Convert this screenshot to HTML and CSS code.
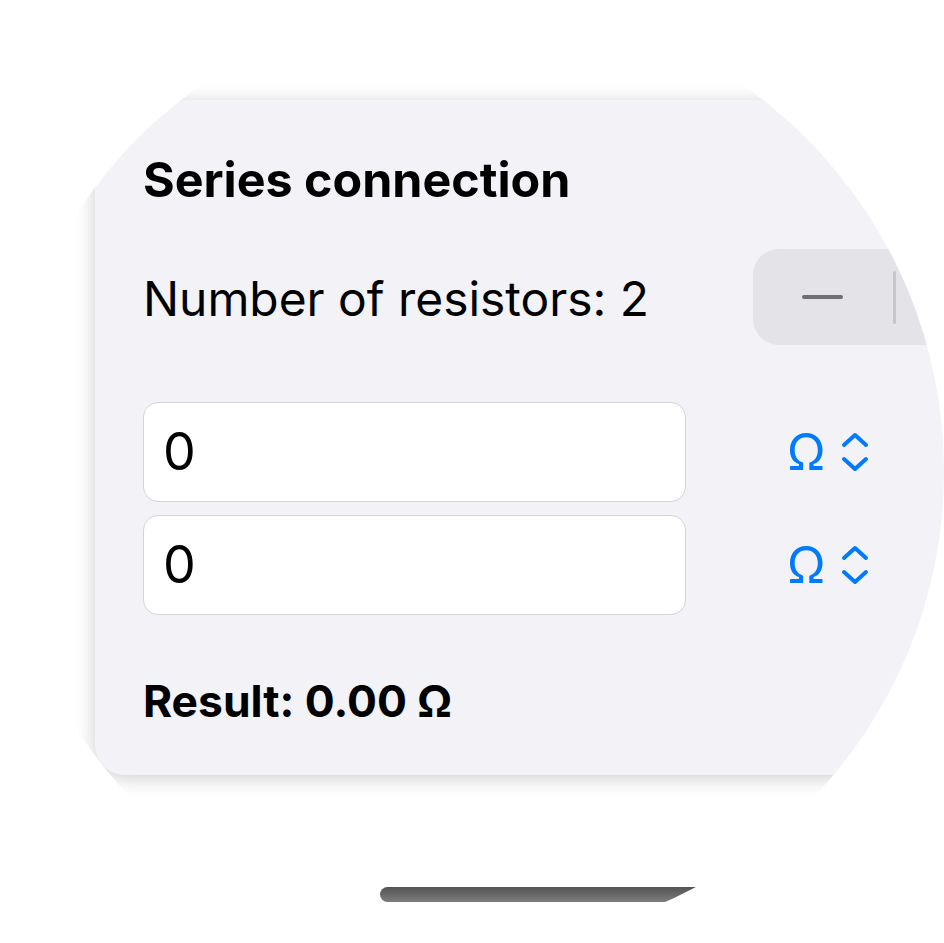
FILE: index.html
```html
<!DOCTYPE html>
<html lang="en">
<head>
<meta charset="utf-8">
<title>Series connection</title>
<link rel="stylesheet" href="styles.css">
</head>
<body>
<div class="lens">
  <div class="screen">
    <section class="card">
      <h1 class="title">Series connection</h1>
      <div class="count-row">
        <span class="count-label">Number of resistors: 2</span>
        <div class="stepper">
          <span class="step"><span class="minus-bar"></span></span>
          <span class="step-divider"></span>
          <span class="step"><span class="plus-bar"></span><span class="plus-bar vertical"></span></span>
        </div>
      </div>
      <div class="fields">
        <div class="field-row">
          <div class="field">0</div>
          <div class="unit">
            <span class="unit-symbol">Ω</span>
            <svg class="chevrons" viewBox="0 0 30 42" width="30" height="42" aria-hidden="true">
              <polyline points="4,14 15,4 26,14"/>
              <polyline points="4,28 15,38 26,28"/>
            </svg>
          </div>
        </div>
        <div class="field-row">
          <div class="field">0</div>
          <div class="unit">
            <span class="unit-symbol">Ω</span>
            <svg class="chevrons" viewBox="0 0 30 42" width="30" height="42" aria-hidden="true">
              <polyline points="4,14 15,4 26,14"/>
              <polyline points="4,28 15,38 26,28"/>
            </svg>
          </div>
        </div>
      </div>
      <p class="result">Result: 0.00 Ω</p>
    </section>
    <div class="home-indicator"></div>
  </div>
</div>
</body>
</html>
```
FILE: styles.css
```css
* { box-sizing: border-box; }

html, body {
  margin: 0;
  padding: 0;
  background: #ffffff;
}

body {
  font-family: Inter, "Liberation Sans", sans-serif;
  color: #000;
}

.lens {
  width: 944px;
  height: 943px;
  overflow: hidden;
  background: #ffffff;
  clip-path: circle(472px at 472px 471.5px);
}

.screen {
  padding-top: 100px;
  padding-left: 95px;
  width: 1200px;
}

.card {
  width: 990px;
  background: #f2f2f7;
  border-radius: 30px;
  padding: 50px 50px 44px 48px;
  box-shadow: 0 3px 20px rgba(0, 0, 0, 0.2);
}

.title {
  margin: 0;
  font-size: 48.4px;
  line-height: 60px;
  font-weight: 700;
  letter-spacing: 0;
}

.count-row {
  margin-top: 39px;
  height: 96px;
  display: flex;
  align-items: center;
  justify-content: space-between;
}

.count-label {
  font-size: 47.9px;
  line-height: 60px;
  margin-top: 4px;
}

.stepper {
  width: 282px;
  height: 96px;
  border-radius: 26px;
  background: #e3e3e8;
  display: flex;
  align-items: center;
}

.step {
  flex: 1;
  height: 100%;
  display: flex;
  align-items: center;
  justify-content: center;
  position: relative;
}

.minus-bar,
.plus-bar {
  width: 41px;
  height: 4px;
  border-radius: 2px;
  background: #6f6f73;
}

.plus-bar.vertical {
  position: absolute;
  transform: rotate(90deg);
}

.step-divider {
  width: 3px;
  height: 53px;
  border-radius: 1.5px;
  background: #c6c6cb;
}

.fields {
  margin-top: 57px;
  display: flex;
  flex-direction: column;
  gap: 13px;
}

.field-row {
  display: flex;
  align-items: center;
}

.field {
  width: 543px;
  height: 100px;
  background: #ffffff;
  border: 1.5px solid #d4d4d8;
  border-radius: 15px;
  padding-left: 19px;
  display: flex;
  align-items: center;
  font-size: 52px;
  line-height: 1;
}

.unit {
  margin-left: 101px;
  display: flex;
  align-items: center;
  color: #007aff;
}

.unit-symbol {
  font-size: 50px;
  line-height: 1;
}

.chevrons {
  margin-left: 14px;
  fill: none;
  stroke: #007aff;
  stroke-width: 4;
  stroke-linecap: round;
  stroke-linejoin: round;
}

.result {
  margin: 56px 0 0 0;
  font-size: 44.4px;
  line-height: 60px;
  font-weight: 700;
}

.home-indicator {
  margin-top: 112px;
  margin-left: 285px;
  width: 402px;
  height: 15px;
  border-radius: 8px;
  background: linear-gradient(#535353, #7d7d7d);
}
```
